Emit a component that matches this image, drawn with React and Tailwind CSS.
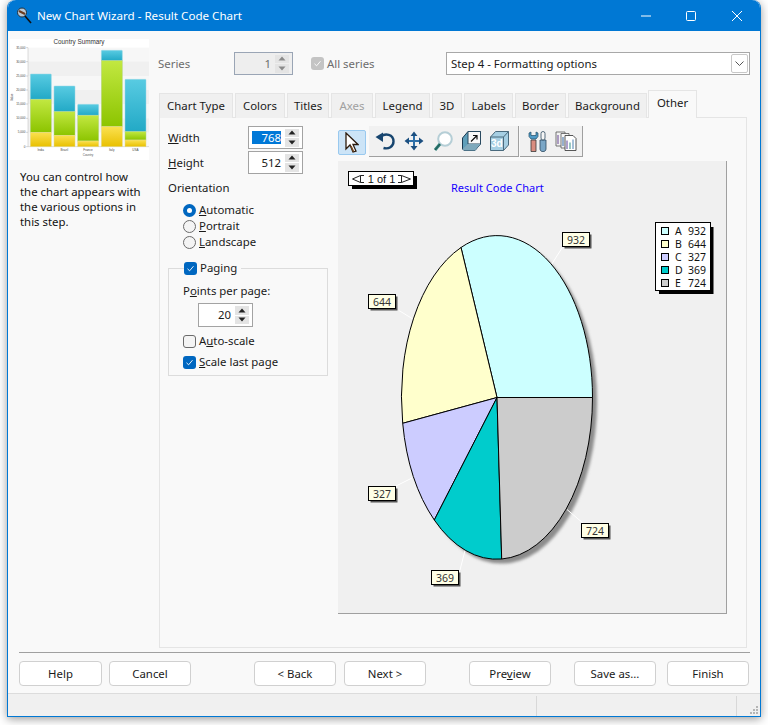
import React from "react";

const FONT = "font-['Noto_Sans','Open_Sans',sans-serif]";

const SpinButtons = ({ disabled }) => (
  <div className="flex flex-col gap-[1px] w-[14px] shrink-0">
    {[0, 1].map((i) => (
      <div key={i} className="h-[8.5px] bg-[#e4e4e4] flex items-center justify-center">
        <svg width="8" height="5" viewBox="0 0 8 5">
          <path d={i === 0 ? "M4 0.5L7.5 4.5H0.5Z" : "M0.5 0.5H7.5L4 4.5Z"} fill={disabled ? "#8a8a8a" : "#222"} />
        </svg>
      </div>
    ))}
  </div>
);

const Spin = ({ value, selected, className }) => (
  <div className={`flex items-center justify-end bg-white border border-[#a3a3a3] pr-[3px] ${className}`}>
    <div className={`flex-1 h-[13px] ml-[3px] mr-[4px] flex items-center justify-end leading-none ${selected ? "bg-[#0078d7] text-white" : ""}`}>
      {value}
    </div>
    <SpinButtons />
  </div>
);

const Radio = ({ checked, children }) => (
  <div className="h-[16px] flex items-center gap-[3px]">
    {checked ? (
      <span className="w-[13px] h-[13px] rounded-full bg-[#0067c0] flex items-center justify-center">
        <span className="w-[5px] h-[5px] rounded-full bg-white" />
      </span>
    ) : (
      <span className="w-[13px] h-[13px] rounded-full border border-[#6b6b6b] bg-[#f4f4f4]" />
    )}
    <span>{children}</span>
  </div>
);

const Check = ({ checked, gray }) =>
  checked ? (
    <span className={`w-[13px] h-[13px] rounded-[3px] flex items-center justify-center ${gray ? "bg-[#c4c4c4]" : "bg-[#0067c0]"}`}>
      <svg width="9" height="9" viewBox="0 0 9 9" fill="none">
        <path d="M1.5 4.8L3.6 6.8L7.5 2.2" stroke="white" strokeWidth="0.9" />
      </svg>
    </span>
  ) : (
    <span className="w-[13px] h-[13px] rounded-[3px] border border-[#6b6b6b] bg-[#f4f4f4]" />
  );

const TABS = [
  ["Chart Type", "w-[74px]"],
  ["Colors", "w-[50px]"],
  ["Titles", "w-[42px]"],
  ["Axes", "w-[42px]"],
  ["Legend", "w-[55px]"],
  ["3D", "w-[30px]"],
  ["Labels", "w-[49px]"],
  ["Border", "w-[51px]"],
  ["Background", "w-[79px]"],
];

const Thumbnail = () => {
  const bars = [
    [91, 222, 298, 397],
    [162, 258, 335, 406],
    [233, 313, 346, 423],
    [304, 151, 182, 380],
    [375, 238, 395, 420],
  ];
  const ticks = [143, 185, 228, 270, 312, 355, 397, 440];
  const tickLabels = ["35,000", "30,000", "25,000", "20,000", "15,000", "10,000", "5,000", "0"];
  const names = ["India", "Brazil", "France", "Italy", "USA"];
  return (
    <svg width="139" height="121" viewBox="30 117 417 363" className="block">
      <defs>
        <linearGradient id="tb" x1="0" y1="0" x2="0" y2="1">
          <stop offset="0" stopColor="#58cbe2" />
          <stop offset="1" stopColor="#22a9c6" />
        </linearGradient>
        <linearGradient id="tg" x1="0" y1="0" x2="0" y2="1">
          <stop offset="0" stopColor="#c2e841" />
          <stop offset="1" stopColor="#8cc400" />
        </linearGradient>
        <linearGradient id="ty" x1="0" y1="0" x2="0" y2="1">
          <stop offset="0" stopColor="#fbe150" />
          <stop offset="1" stopColor="#e8c000" />
        </linearGradient>
      </defs>
      <rect x="30" y="117" width="417" height="363" fill="white" />
      <rect x="84" y="143" width="363" height="297" fill="#f7f7f7" />
      <rect x="84" y="185" width="363" height="43" fill="#f0f0f0" />
      <rect x="84" y="270" width="363" height="42" fill="#f0f0f0" />
      <rect x="84" y="355" width="363" height="42" fill="#f0f0f0" />
      {ticks.map((y, i) => (
        <g key={y}>
          <line x1="78" x2="84" y1={y} y2={y} stroke="#888" strokeWidth="1" />
          <text x="76" y={y + 3} fontSize="9" textAnchor="end" fill="#444" fontFamily="Liberation Sans">
            {tickLabels[i]}
          </text>
        </g>
      ))}
      <line x1="84" x2="84" y1="143" y2="440" stroke="#999" />
      <line x1="84" x2="447" y1="440" y2="440" stroke="#999" />
      {bars.map(([x, a, b, c], i) => (
        <g key={x}>
          <rect x={x} y={a} width="63" height={b - a} rx="2" fill="url(#tb)" stroke="#9ad6e4" strokeWidth="1.5" />
          <rect x={x} y={b} width="63" height={c - b} fill="url(#tg)" stroke="#b5d68a" strokeWidth="1.5" />
          <rect x={x} y={c} width="63" height={440 - c} fill="url(#ty)" stroke="#e6d98a" strokeWidth="1.5" />
          <text x={x + 31} y="454" fontSize="9" textAnchor="middle" fill="#444" fontFamily="Liberation Sans">
            {names[i]}
          </text>
        </g>
      ))}
      <text x="264" y="469" fontSize="9" textAnchor="middle" fill="#555" fontFamily="Liberation Sans">
        Country
      </text>
      <text x="38" y="292" fontSize="9" textAnchor="middle" fill="#555" fontFamily="Liberation Sans" transform="rotate(-90 38 292)">
        Value
      </text>
      <text x="237" y="131" fontSize="19" textAnchor="middle" fill="#333" fontFamily="Liberation Sans">
        Country Summary
      </text>
    </svg>
  );
};

// toolbar glyphs
const ArrowIcon = () => (
  <svg width="14" height="22" viewBox="0 0 14 22">
    <path d="M1 1V17L5 13L8 20L11 19L8 12.5H13Z" fill="white" stroke="#2b1a0c" strokeWidth="1.3" strokeLinejoin="miter" />
    <path d="M6 14L8.5 19.5" stroke="#7a4a20" strokeWidth="1.5" />
  </svg>
);

const UndoIcon = () => (
  <svg width="20" height="18" viewBox="0 0 20 18" fill="none">
    <path d="M6 4.5C10 1 18.5 2 18.5 9.5C18.5 14.5 13.5 17.5 8.5 16" stroke="#17456f" strokeWidth="2.4" />
    <path d="M0.5 5L8 0.5V10Z" fill="#17456f" />
  </svg>
);

const MoveIcon = () => (
  <svg width="20" height="20" viewBox="0 0 20 20" fill="none">
    <path d="M10 2V18M2 10H18" stroke="#2d6fa8" strokeWidth="2" />
    <path d="M10 0.5L13.5 5H6.5ZM10 19.5L6.5 15H13.5ZM0.5 10L5 6.5V13.5ZM19.5 10L15 13.5V6.5Z" fill="#1c4f80" />
  </svg>
);

const ZoomIcon = () => (
  <svg width="20" height="21" viewBox="0 0 20 21" fill="none">
    <circle cx="12" cy="8" r="6.8" fill="white" stroke="#b5ced6" strokeWidth="2" />
    <path d="M7 13L2 19" stroke="#2f7f78" strokeWidth="3" />
    <path d="M7 13L2 19" stroke="#17413d" strokeWidth="0.7" />
  </svg>
);

const BoxIcon = () => (
  <svg width="19" height="20" viewBox="0 0 19 20">
    <path d="M0.5 18V7L6 0.5H18.5V13L13 19.5H2Z" fill="#5f9fba" stroke="#1a3a52" strokeWidth="1" />
    <path d="M6 0.5H18.5V13H6Z" fill="#fafafa" stroke="#2a4a60" strokeWidth="1" />
    <path d="M9 10.5L15 4.5M11 4.5H15V8.5" stroke="#111" strokeWidth="1.2" fill="none" />
    <path d="M0.5 18L6 13H18.5L13 19.5H2Z" fill="#7fa9bc" />
  </svg>
);

const CubeIcon = () => (
  <svg width="19" height="20" viewBox="0 0 19 20">
    <path d="M0.5 6L5.5 0.5H18.5V14L13.5 19.5H0.5Z" fill="#a6cfe3" stroke="#4a6a7d" strokeWidth="1" />
    <path d="M0.5 6H13.5V19.5M13.5 6L18.5 0.5" fill="none" stroke="#4a6a7d" strokeWidth="1" />
    <text x="1" y="16" fontSize="10" fontWeight="700" fill="white" fontFamily="Liberation Sans">3d</text>
  </svg>
);

const ToolsIcon = () => (
  <svg width="19" height="21" viewBox="0 0 19 21">
    <path d="M3 9H8V20.5H3Z" fill="#d98d80" stroke="#3a3a3a" strokeWidth="0.8" />
    <path d="M12 9H18V18C18 21.5 12 21.5 12 18Z" fill="#7aa6c6" stroke="#2d4a5f" strokeWidth="0.8" />
    <path d="M1 2V5.5L3 8H8L10 5.5V2L8 1V4.5H3V1Z" fill="#4f9bc7" stroke="#1f4a66" strokeWidth="0.7" />
    <rect x="13" y="0.5" width="4" height="8.5" rx="2" fill="#f5f5f5" stroke="#2d4a5f" strokeWidth="0.8" />
  </svg>
);

const PagesIcon = () => (
  <svg width="22" height="20" viewBox="0 0 22 20">
    <path d="M1 1H10V15H1Z" fill="#f2f2f2" stroke="#555" strokeWidth="0.8" />
    <path d="M6 2.5H14V17H6Z" fill="#f6f6f6" stroke="#555" strokeWidth="0.8" />
    <path d="M10 4.5H18L21 7.5V19.5H10Z" fill="white" stroke="#444" strokeWidth="0.9" />
    <path d="M3 4V13" stroke="#9a85b5" strokeWidth="1.6" />
    <path d="M8 6V15" stroke="#7f9fc4" strokeWidth="1.6" />
    <path d="M12 9.5V18" stroke="#8a78b8" strokeWidth="1.4" />
    <path d="M15 11.5V18" stroke="#6fb0a8" strokeWidth="1.4" />
    <path d="M18 8.5V18" stroke="#7fa4c8" strokeWidth="1.4" />
  </svg>
);

const PIE = [
  ["M497 397.5L592.5 397.5A95.5 161.5 0 0 0 461 247.5Z", "#ccffff"],
  ["M497 397.5L461 247.5A95.5 161.5 0 0 0 402.7 423.3Z", "#ffffcc"],
  ["M497 397.5L402.7 423.3A95.5 161.5 0 0 0 434.3 520Z", "#ccccff"],
  ["M497 397.5L434.3 520A95.5 161.5 0 0 0 501.7 559Z", "#00cccc"],
  ["M497 397.5L501.7 559A95.5 161.5 0 0 0 592.5 397.5Z", "#cccccc"],
];

const LABELS = [
  { t: "932", x: 562.5, y: 232.5, l: [551.5, 264.5, 562, 248] },
  { t: "644", x: 368.5, y: 294.5, l: [399, 310.5, 412, 318.5] },
  { t: "327", x: 368.5, y: 486.5, l: [396, 486, 412, 478] },
  { t: "724", x: 581.5, y: 523.5, l: [567, 509.5, 584, 524] },
  { t: "369", x: 431.5, y: 570.5, l: [465, 550.5, 460, 570] },
];

const LEGEND = [
  ["A", "932", "#ccffff"],
  ["B", "644", "#ffffcc"],
  ["C", "327", "#ccccff"],
  ["D", "369", "#00cccc"],
  ["E", "724", "#cccccc"],
];

const PieChart = () => (
  <svg width="389" height="452" viewBox="338 161 389 452" className="block">
    <defs>
      <filter id="soft" x="-20%" y="-20%" width="140%" height="140%">
        <feGaussianBlur stdDeviation="1.6" />
      </filter>
      <filter id="tiny" x="-30%" y="-30%" width="160%" height="160%">
        <feGaussianBlur stdDeviation="0.7" />
      </filter>
    </defs>

    {/* pager */}
    <rect x="352" y="176" width="65" height="13" fill="#000" filter="url(#tiny)" />
    <rect x="348.5" y="171.5" width="65" height="14" fill="white" stroke="black" />
    <path d="M364 175.5H360.5V182.5H364M360.5 175.5L352.5 179L360.5 182.5" fill="none" stroke="#222" />
    <path d="M398 175.5H401.5V182.5H398M401.5 175.5L410.5 179L401.5 182.5" fill="none" stroke="#222" />
    <text x="381.5" y="183" fontSize="11" textAnchor="middle" fill="#111" fontFamily="Liberation Sans">
      1 of 1
    </text>

    <text x="451" y="192" fontSize="11" fill="#1400ff" fontFamily="Noto Sans">
      Result Code Chart
    </text>

    {/* pie */}
    <ellipse cx="501.5" cy="402" rx="95.5" ry="161.5" fill="#8c8c8c" filter="url(#soft)" />
    {LABELS.map((lb) => (
      <line key={lb.t} x1={lb.l[0]} y1={lb.l[1]} x2={lb.l[2]} y2={lb.l[3]} stroke="white" strokeWidth="1" />
    ))}
    {PIE.map(([d, fill]) => (
      <path key={fill} d={d} fill={fill} stroke="black" strokeWidth="1" />
    ))}
    {LABELS.map((lb) => (
      <g key={lb.t}>
        <rect x={lb.x + 2} y={lb.y + 2} width="27" height="14" fill="#555" filter="url(#tiny)" />
        <rect x={lb.x} y={lb.y} width="27" height="14" fill="#ffffe6" stroke="black" />
        <text x={lb.x + 13.5} y={lb.y + 11} fontSize="10.5" textAnchor="middle" fill="#333" fontFamily="Noto Sans">
          {lb.t}
        </text>
      </g>
    ))}

    {/* legend */}
    <rect x="659" y="227" width="54.5" height="67" fill="#000" filter="url(#tiny)" />
    <rect x="655.5" y="222.5" width="55" height="68" fill="white" stroke="black" />
    {LEGEND.map(([k, v, c], i) => (
      <g key={k}>
        <rect x="661.5" y={227.5 + i * 13} width="7" height="7" fill={c} stroke="black" />
        <text y={235 + i * 13} fontSize="10.5" fill="#111" fontFamily="Noto Sans">
          <tspan x="675">{k}</tspan>
          <tspan x="688">{v}</tspan>
        </text>
      </g>
    ))}
  </svg>
);

const Button = ({ children, className = "" }) => (
  <button className={`w-[82px] h-[25px] bg-white border border-[#d0d0d0] rounded-[4px] text-[11.4px] text-[#1a1a1a] ${className}`}>
    {children}
  </button>
);

export default function App() {
  return (
    <div className={`w-[768px] h-[725px] bg-white overflow-hidden pl-[7px] text-[11.4px] text-[#1a1a1a] ${FONT}`}>
      <div className="w-[754px] h-[717px] flex flex-col rounded-t-[8px] border border-t-0 border-[#0078d4] bg-[#f9f9f9] shadow-[0_2px_10px_rgba(0,0,0,0.4)]">
        {/* Title bar */}
        <div className="h-[31px] shrink-0 bg-[#0078d4] rounded-t-[8px] flex items-center text-white text-[11.6px]">
          <svg width="16" height="18" viewBox="0 0 16 18" className="ml-[8px] mr-[5px]">
            <circle cx="6" cy="5.5" r="4.5" fill="#b9c9d6" stroke="#20303c" />
            <path d="M3 4L9 7" stroke="#6b3b1f" strokeWidth="2" />
            <path d="M9 9L15 16" stroke="#111" strokeWidth="1.6" />
          </svg>
          <span>New Chart Wizard - Result Code Chart</span>
          <div className="ml-auto flex items-center">
            <svg width="10" height="2" viewBox="0 0 10 2" className="mr-[35px]">
              <path d="M0 1H10" stroke="white" strokeWidth="1" />
            </svg>
            <svg width="10" height="10" viewBox="0 0 10 10" className="mr-[36px]">
              <rect x="0.5" y="0.5" width="9" height="9" rx="1" fill="none" stroke="white" />
            </svg>
            <svg width="10" height="10" viewBox="0 0 10 10" className="mr-[18px]">
              <path d="M0 0L10 10M10 0L0 10" stroke="white" strokeWidth="1" />
            </svg>
          </div>
        </div>

        <div className="flex-1 flex flex-col min-h-0">
          <div className="flex h-[621px] shrink-0">
            {/* Left column */}
            <div className="w-[151px] shrink-0 pl-[2px] pt-[8px]">
              <Thumbnail />
              <p className="ml-[10px] mt-[9px] w-[125px] leading-[15px] text-[#111]">
                You can control how the chart appears with the various options in this step.
              </p>
            </div>

            {/* Right column */}
            <div className="w-[591px] shrink-0">
              <div className="flex items-center mt-[21px] h-[23px] -ml-px">
                <span className="w-[76px] text-[#6d6d6d]">Series</span>
                <div className="w-[59px] h-[23px] bg-[#eeeeee] border border-[#9aa5b5] flex items-center justify-end pr-[3px] text-[#6d6d6d]">
                  <span className="mr-[4px]">1</span>
                  <SpinButtons disabled />
                </div>
                <div className="ml-[18px] flex items-center gap-[3px] text-[#6d6d6d]">
                  <Check checked gray />
                  <span>All series</span>
                </div>
                <div className="ml-auto w-[304px] h-[23px] bg-white border border-[#a8a8a8] flex items-center pl-[4px] pr-[1px]">
                  <span className="flex-1">Step 4 - Formatting options</span>
                  <span className="w-[17px] h-[19px] border border-[#c8c8c8] rounded-[2px] flex items-center justify-center">
                    <svg width="9" height="5" viewBox="0 0 9 5" fill="none">
                      <path d="M0.5 0.5L4.5 4.5L8.5 0.5" stroke="#555" />
                    </svg>
                  </span>
                </div>
              </div>

              {/* Tabs */}
              <div className="flex items-end gap-[2px] h-[28px] mt-[15px] relative z-10">
                {TABS.map(([name, w]) => (
                  <div
                    key={name}
                    className={`${w} h-[25px] bg-[#f0f0f0] border border-b-0 border-[#e5e5e5] flex items-center justify-center ${name === "Axes" ? "text-[#a0a0a0]" : ""}`}
                  >
                    {name}
                  </div>
                ))}
                <div className="w-[49px] h-[28px] -ml-px bg-[#f9f9f9] border border-b-0 border-[#e5e5e5] flex items-center justify-center pb-[3px]">
                  Other
                </div>
              </div>

              {/* Tab panel */}
              <div className="-mt-px w-[588px] h-[531px] border border-[#e5e5e5] flex bg-[#f9f9f9]">
                <div className="w-[178px] shrink-0 pl-[8px] pt-[8px]">
                  <div className="w-[135px] flex items-center justify-between">
                    <span><u>W</u>idth</span>
                    <Spin value="768" selected className="w-[55px] h-[23px]" />
                  </div>
                  <div className="w-[135px] flex items-center justify-between mt-[2px]">
                    <span><u>H</u>eight</span>
                    <Spin value="512" className="w-[55px] h-[23px]" />
                  </div>
                  <div className="mt-[6px] h-[16px] leading-[16px]">Orientation</div>
                  <div className="mt-[6px] pl-[15px]">
                    <Radio checked><u>A</u>utomatic</Radio>
                    <Radio><u>P</u>ortrait</Radio>
                    <Radio><u>L</u>andscape</Radio>
                  </div>
                  <fieldset className="mt-[10px] w-[160px] border border-[#dcdcdc] pl-[14px] pb-[5px]">
                    <legend className="ml-[1px] pr-[4px] h-[16px] flex items-center gap-[3px]">
                      <Check checked />
                      <span>Paging</span>
                    </legend>
                    <div className="mt-[7px] h-[16px] leading-[16px]">P<u>o</u>ints per page:</div>
                    <Spin value="20" className="ml-[15px] mt-[4px] w-[55px] h-[24px]" />
                    <div className="mt-[6px] h-[16px] flex items-center gap-[3px]">
                      <Check />
                      <span>A<u>u</u>to-scale</span>
                    </div>
                    <div className="mt-[5px] h-[16px] flex items-center gap-[3px]">
                      <Check checked />
                      <span><u>S</u>cale last page</span>
                    </div>
                  </fieldset>
                </div>

                <div className="pt-[8px]">
                  {/* Toolbar */}
                  <div className="flex h-[31px]">
                    <div className="w-[31px] flex items-end pb-[2px]">
                      <div className="w-[28px] h-[25px] rounded-[2px] bg-[#cce4f7] border border-[#99c9ef] flex items-center justify-center">
                        <ArrowIcon />
                      </div>
                    </div>
                    <div className="w-[150px] bg-[#f1f1f1] border-r border-b border-[#a0a0a0] flex items-center pl-[6px] gap-[9px]">
                      <UndoIcon />
                      <MoveIcon />
                      <ZoomIcon />
                      <BoxIcon />
                      <CubeIcon />
                    </div>
                    <div className="ml-[1px] w-[63px] bg-[#f1f1f1] border-r border-b border-[#a0a0a0] flex items-center pl-[8px] gap-[8px]">
                      <ToolsIcon />
                      <PagesIcon />
                    </div>
                  </div>
                  {/* Plot area */}
                  <div className="mt-[4px] w-[389px] h-[453px] bg-[#f0f0f0] border-r border-b border-[#a0a0a0]">
                    <PieChart />
                  </div>
                </div>
              </div>
            </div>
          </div>

          {/* Footer */}
          <div className="mx-[11px] w-[731px] border-t border-[#a0a0a0]" />
          <div className="flex items-center mt-[8px] ml-[11px] w-[731px]">
            <Button className="w-[83px]">Help</Button>
            <Button className="ml-[7px]">Cancel</Button>
            <Button className="ml-[63px]">&lt; Back</Button>
            <Button className="ml-[8px]">Next &gt;</Button>
            <Button className="ml-[43px]">Pre<u>v</u>iew</Button>
            <Button className="ml-[23px]">Save as...</Button>
            <Button className="ml-[11px]">Finish</Button>
          </div>

          {/* Status bar */}
          <div className="mt-[7px] flex-1 bg-[#f0f0f0] border-t border-[#dcdcdc] flex items-stretch pt-[2px]">
            <div className="w-[529px] border-r border-[#d8d8d8]" />
            <div className="w-[200px] border-r border-[#d8d8d8]" />
            <div className="flex-1 flex items-end justify-end pr-[1px] pb-[1px]">
              <svg width="10" height="10" viewBox="0 0 10 10">
                <path d="M7 1H9V3H7ZM4 4H6V6H4ZM7 4H9V6H7ZM1 7H3V9H1ZM4 7H6V9H4ZM7 7H9V9H7Z" fill="#b5b5b5" />
              </svg>
            </div>
          </div>
        </div>
      </div>
    </div>
  );
}
